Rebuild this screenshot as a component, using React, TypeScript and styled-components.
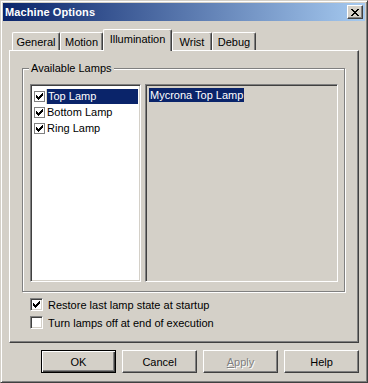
import React from "react";
import styled, { createGlobalStyle, css } from "styled-components";

const Global = createGlobalStyle`
  html, body { margin: 0; padding: 0; background: #d4d0c8; }
  body { font-family: "Liberation Sans", Arial, sans-serif; font-size: 11px; color: #000; }
`;

const Window = styled.div`
  width: 368px;
  height: 383px;
  box-sizing: border-box;
  background: #d4d0c8;
  border: 1px solid;
  border-color: #d4d0c8 #404040 #404040 #d4d0c8;
  box-shadow: inset 1px 1px 0 #fff, inset -1px -1px 0 #808080;
  padding: 2px;
  display: flex;
  flex-direction: column;
`;

const TitleBar = styled.div`
  height: 18px;
  flex: none;
  display: flex;
  align-items: center;
  justify-content: space-between;
  padding: 0 2px 0 2px;
  background: linear-gradient(to right, #0a246a, #a6caf0);
`;

const TitleText = styled.div`
  color: #fff;
  font-weight: bold;
  font-size: 11px;
  line-height: 18px;
  letter-spacing: 0.1px;
`;

const CloseButton = styled.div`
  width: 16px;
  height: 14px;
  box-sizing: border-box;
  background: #d4d0c8;
  border: 1px solid;
  border-color: #fff #404040 #404040 #fff;
  box-shadow: inset -1px -1px 0 #808080;
  display: flex;
  align-items: center;
  justify-content: center;
`;

const Body = styled.div`
  flex: 1;
  display: flex;
  flex-direction: column;
  padding: 8px 6px 0 6px;
`;

const TabStrip = styled.div`
  display: flex;
  align-items: flex-end;
  height: 21px;
  padding-left: 3px;
  position: relative;
  z-index: 1;
`;

const Tab = styled.div<{ $w: number; $active?: boolean }>`
  width: ${(p) => p.$w}px;
  box-sizing: border-box;
  height: 18px;
  background: #d4d0c8;
  border-left: 1px solid #fff;
  border-top: 1px solid #fff;
  border-right: 1px solid #404040;
  border-radius: 2px 2px 0 0;
  box-shadow: inset -1px 0 0 #808080;
  display: flex;
  align-items: center;
  justify-content: center;
  padding-top: 1px;
  ${(p) =>
    p.$active &&
    css`
      height: 22px;
      margin-bottom: -1px;
      padding-top: 0;
      padding-bottom: 3px;
    `}
`;

const Panel = styled.div`
  width: 350px;
  height: 293px;
  box-sizing: border-box;
  border: 1px solid;
  border-color: #fff #404040 #404040 #fff;
  box-shadow: inset -1px -1px 0 #808080;
  display: flex;
  flex-direction: column;
  padding: 17px 0 0 12px;
`;

const Group = styled.div`
  position: relative;
  width: 323px;
  height: 224px;
  box-sizing: border-box;
  border: 1px solid #808080;
  box-shadow: 1px 1px 0 #fff, inset 1px 1px 0 #fff;
  display: flex;
  gap: 4px;
  padding: 15px 0 0 7px;
`;

const Legend = styled.div`
  position: absolute;
  top: -8px;
  left: 6px;
  padding: 0 2px;
  background: #d4d0c8;
  line-height: 14px;
`;

const Sunken = styled.div<{ $w: number; $white?: boolean }>`
  width: ${(p) => p.$w}px;
  height: 198px;
  box-sizing: border-box;
  background: ${(p) => (p.$white ? "#fff" : "#d4d0c8")};
  border: 1px solid;
  border-color: #808080 #fff #fff #808080;
  box-shadow: inset 1px 1px 0 #404040, inset -1px -1px 0 #d4d0c8;
  padding: 3px 2px 2px 2px;
  display: flex;
  flex-direction: column;
  align-items: flex-start;
`;

const ListRow = styled.div`
  height: 16px;
  display: flex;
  align-items: center;
  width: 100%;
`;

const SmallBox = styled.div`
  width: 11px;
  height: 11px;
  box-sizing: border-box;
  margin-left: 1px;
  border: 1px solid #808080;
  background: #fff;
  display: flex;
  align-items: center;
  justify-content: center;
  flex: none;
`;

const ItemLabel = styled.div<{ $sel?: boolean }>`
  margin-left: 1px;
  padding: 0 1px 0 1px;
  height: 15px;
  line-height: 15px;
  flex: 1;
  ${(p) =>
    p.$sel &&
    css`
      background: #0a246a;
      color: #fff;
      border-left: 1px solid #dcd8c0;
    `}
`;

const SelText = styled.span`
  margin-left: 1px;
  background: #0a246a;
  color: #fff;
  line-height: 14px;
  padding: 0 1px;
`;

const Options = styled.div`
  display: flex;
  flex-direction: column;
  gap: 5px;
  padding: 6px 0 0 8px;
`;

const OptionRow = styled.div`
  display: flex;
  align-items: center;
  gap: 5px;
  height: 13px;
`;

const BigBox = styled.div`
  width: 13px;
  height: 13px;
  box-sizing: border-box;
  background: #fff;
  border: 1px solid;
  border-color: #808080 #fff #fff #808080;
  box-shadow: inset 1px 1px 0 #404040, inset -1px -1px 0 #d4d0c8;
  display: flex;
  align-items: center;
  justify-content: center;
`;

const ButtonRow = styled.div`
  display: flex;
  justify-content: flex-end;
  gap: 6px;
  width: 350px;
  margin-top: 7px;
`;

const Button = styled.div<{ $default?: boolean; $disabled?: boolean }>`
  width: 75px;
  height: 23px;
  box-sizing: border-box;
  display: flex;
  align-items: center;
  justify-content: center;
  background: #d4d0c8;
  border: 1px solid;
  border-color: #fff #404040 #404040 #fff;
  box-shadow: inset -1px -1px 0 #808080;
  ${(p) =>
    p.$default &&
    css`
      border: 1px solid #000;
      box-shadow: inset 1px 1px 0 #fff, inset -1px -1px 0 #404040, inset -2px -2px 0 #808080;
    `}
  ${(p) =>
    p.$disabled &&
    css`
      color: #808080;
      text-shadow: 1px 1px 0 #fff;
    `}
`;

const Check = () => (
  <svg width="7" height="7" viewBox="0 0 7 7" shapeRendering="crispEdges">
    <path
      fill="#000"
      d="M6 0h1v3h-1zM5 1h1v3h-1zM4 2h1v3h-1zM3 3h1v3h-1zM2 4h1v3h-1zM1 3h1v3h-1zM0 2h1v3h-1z"
    />
  </svg>
);

const CloseGlyph = () => (
  <svg width="8" height="7" viewBox="0 0 8 7" shapeRendering="crispEdges">
    <path
      fill="#000"
      d="M0 0h2v1h-2zM6 0h2v1h-2zM1 1h2v1h-2zM5 1h2v1h-2zM2 2h4v1h-4zM3 3h2v1h-2zM2 4h4v1h-4zM1 5h2v1h-2zM5 5h2v1h-2zM0 6h2v1h-2zM6 6h2v1h-2z"
    />
  </svg>
);

const tabs = [
  { label: "General", w: 48 },
  { label: "Motion", w: 43 },
  { label: "Illumination", w: 69, active: true },
  { label: "Wrist", w: 40 },
  { label: "Debug", w: 44 },
];

const lamps = ["Top Lamp", "Bottom Lamp", "Ring Lamp"];

export default function App() {
  return (
    <>
      <Global />
      <Window>
        <TitleBar>
          <TitleText>Machine Options</TitleText>
          <CloseButton>
            <CloseGlyph />
          </CloseButton>
        </TitleBar>
        <Body>
          <TabStrip>
            {tabs.map((t) => (
              <Tab key={t.label} $w={t.w} $active={t.active}>
                {t.label}
              </Tab>
            ))}
          </TabStrip>
          <Panel>
            <Group>
              <Legend>Available Lamps</Legend>
              <Sunken $w={111} $white>
                {lamps.map((l, i) => (
                  <ListRow key={l}>
                    <SmallBox>
                      <Check />
                    </SmallBox>
                    <ItemLabel $sel={i === 0}>{l}</ItemLabel>
                  </ListRow>
                ))}
              </Sunken>
              <Sunken $w={193}>
                <SelText>Mycrona Top Lamp</SelText>
              </Sunken>
            </Group>
            <Options>
              <OptionRow>
                <BigBox>
                  <Check />
                </BigBox>
                <span>Restore last lamp state at startup</span>
              </OptionRow>
              <OptionRow>
                <BigBox />
                <span>Turn lamps off at end of execution</span>
              </OptionRow>
            </Options>
          </Panel>
          <ButtonRow>
            <Button $default>OK</Button>
            <Button>Cancel</Button>
            <Button $disabled>
              <span>
                <u>A</u>pply
              </span>
            </Button>
            <Button>Help</Button>
          </ButtonRow>
        </Body>
      </Window>
    </>
  );
}
